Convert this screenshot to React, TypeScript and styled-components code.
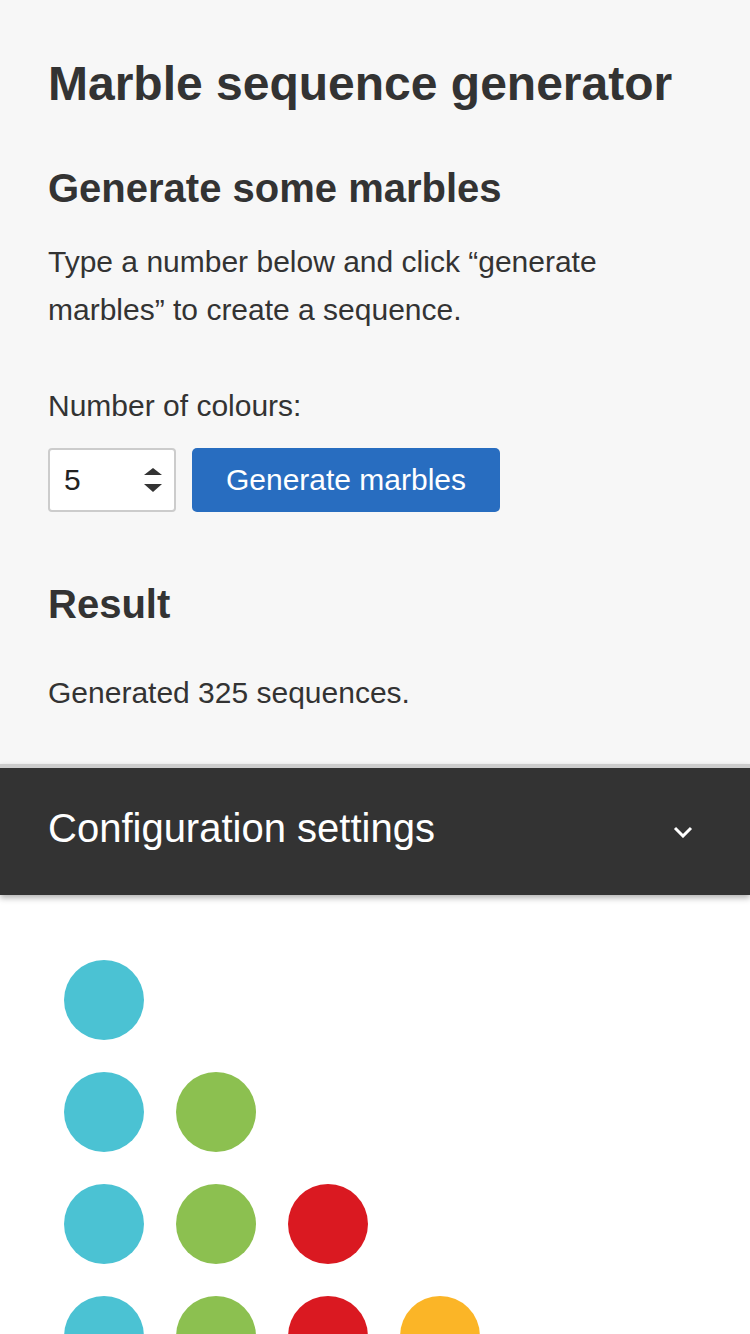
import React from "react";
import styled, { createGlobalStyle } from "styled-components";

const Global = createGlobalStyle`
  html, body { margin: 0; padding: 0; background: #ffffff; }
  body { font-family: "Liberation Sans", Arial, sans-serif; color: #333333; }
  * { box-sizing: border-box; }
`;

const Page = styled.div`
  width: 750px;
  min-height: 1334px;
  overflow: hidden;
  background: #ffffff;
`;

const Intro = styled.section`
  background: #f7f7f7;
  padding: 56px 48px 47px;
`;

const Title = styled.h1`
  margin: 0 0 52px;
  font-size: 48px;
  line-height: 56px;
  font-weight: 700;
  color: #333333;
`;

const Heading = styled.h2<{ $gap?: number }>`
  margin: 0 0 ${(p) => p.$gap ?? 30}px;
  font-size: 40px;
  line-height: 48px;
  font-weight: 700;
  color: #333333;
`;

const Text = styled.p<{ $gap?: number }>`
  margin: 0 0 ${(p) => p.$gap ?? 0}px;
  font-size: 30px;
  line-height: 48px;
  color: #333333;
`;

const Label = styled.label`
  display: block;
  font-size: 30px;
  line-height: 36px;
  margin-bottom: 24px;
  color: #333333;
`;

const FormRow = styled.div`
  display: flex;
  gap: 16px;
  margin-bottom: 68px;
`;

const NumberBox = styled.div`
  width: 128px;
  height: 64px;
  background: #ffffff;
  border: 2px solid #cccccc;
  border-radius: 4px;
  display: flex;
  align-items: center;
  justify-content: space-between;
  padding: 0 12px 0 14px;
  font-size: 30px;
  color: #222222;
`;

const Spinner = styled.div`
  display: flex;
  flex-direction: column;
  gap: 9px;
`;

const Button = styled.button`
  height: 64px;
  width: 308px;
  border: none;
  border-radius: 5px;
  background: #286dc0;
  color: #ffffff;
  font-family: "Liberation Sans", Arial, sans-serif;
  font-size: 30px;
  padding: 0;
`;

const ConfigBar = styled.div`
  border-top: 4px solid #cccccc;
  background: #333333;
  height: 131px;
  display: flex;
  align-items: center;
  justify-content: space-between;
  padding: 0 57px 0 48px;
  box-shadow: 0 3px 6px rgba(0, 0, 0, 0.3);
  position: relative;
`;

const ConfigTitle = styled.span`
  color: #ffffff;
  font-size: 40px;
  font-weight: 400;
  margin-bottom: 7px;
`;

const Marbles = styled.div`
  display: flex;
  flex-direction: column;
  gap: 32px;
  padding: 65px 64px 0;
`;

const MarbleRow = styled.div`
  display: flex;
  gap: 32px;
`;

const Marble = styled.div<{ $color: string }>`
  width: 80px;
  height: 80px;
  border-radius: 50%;
  background: ${(p) => p.$color};
  flex: none;
`;

const colors = ["#4bc2d3", "#8cc050", "#da1921", "#fbb527", "#8b5aa8"];

export default function App() {
  return (
    <Page>
      <Global />
      <Intro>
        <Title>Marble sequence generator</Title>
        <Heading $gap={26}>Generate some marbles</Heading>
        <Text $gap={54}>
          Type a number below and click “generate marbles” to create a sequence.
        </Text>
        <Label>Number of colours:</Label>
        <FormRow>
          <NumberBox>
            <span>5</span>
            <Spinner>
              <svg width="18" height="7" viewBox="0 0 18 7">
                <polygon points="9,0 18,7 0,7" fill="#333" />
              </svg>
              <svg width="18" height="8" viewBox="0 0 18 8">
                <polygon points="0,0 18,0 9,8" fill="#333" />
              </svg>
            </Spinner>
          </NumberBox>
          <Button>Generate marbles</Button>
        </FormRow>
        <Heading $gap={41}>Result</Heading>
        <Text>Generated 325 sequences.</Text>
      </Intro>
      <ConfigBar>
        <ConfigTitle>Configuration settings</ConfigTitle>
        <svg width="20" height="12" viewBox="0 0 20 12">
          <polyline points="2,2 10,10 18,2" fill="none" stroke="#fff" strokeWidth="3" />
        </svg>
      </ConfigBar>
      <Marbles>
        {[1, 2, 3, 4].map((n) => (
          <MarbleRow key={n}>
            {colors.slice(0, n).map((c, i) => (
              <Marble key={i} $color={c} />
            ))}
          </MarbleRow>
        ))}
      </Marbles>
    </Page>
  );
}
